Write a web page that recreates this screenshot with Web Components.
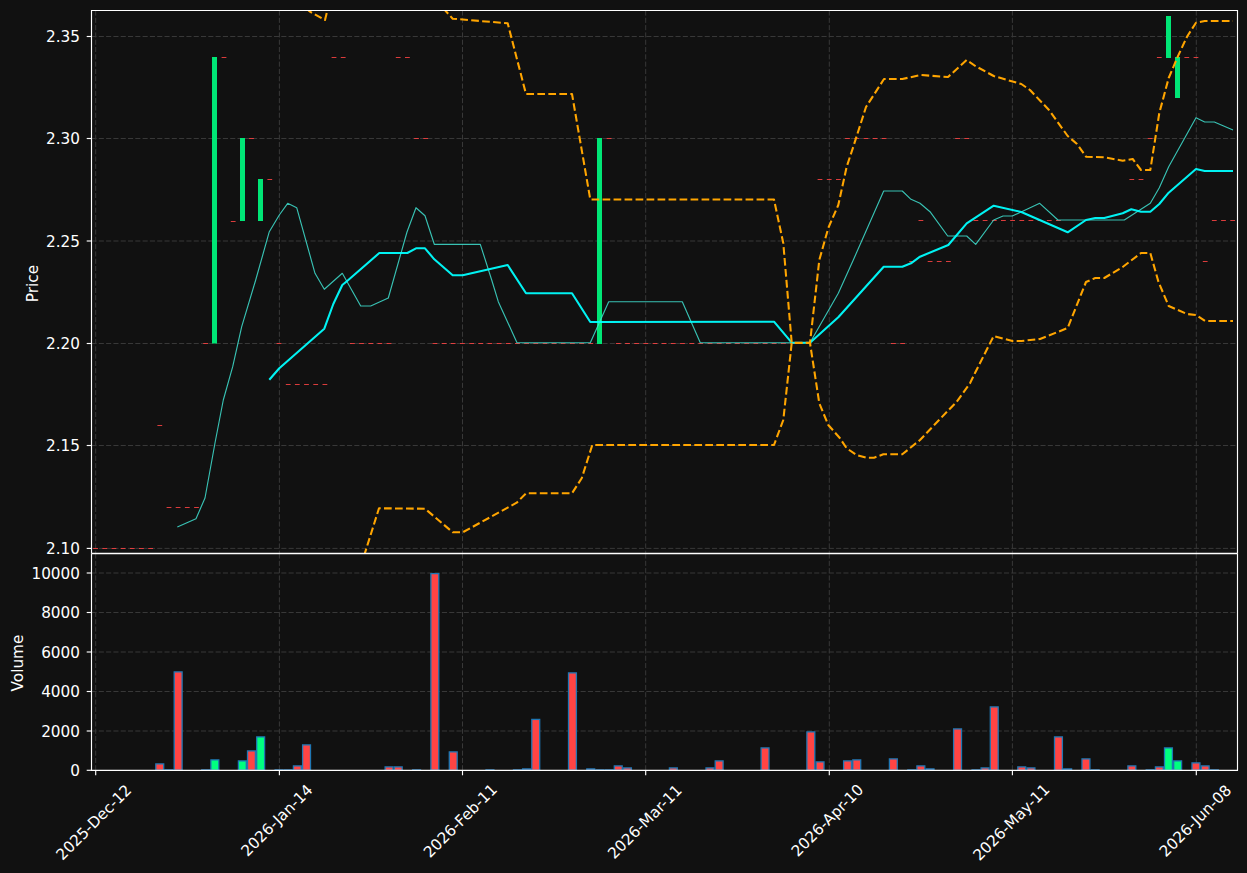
<!DOCTYPE html>
<html lang="en"><head><meta charset="utf-8"><title>Chart</title>
<style>html,body{margin:0;padding:0;background:#111111}</style></head>
<body>
<chart-figure>
  <price-panel></price-panel>
  <volume-panel></volume-panel>
</chart-figure>
<script>
const X = i => 95.6 + 9.17 * i;
const GX = [95.7, 279.4, 462.5, 645.7, 829.3, 1012.4, 1196.3];
const FONT = `font-family="DejaVu Sans" font-size="15.28" fill="#ffffff"`;
const pts = a => a.map(p => p.join(',')).join(' ');
const vgrid = (y1, y2) => GX.map(x => `<line x1="${x}" x2="${x}" y1="${y1}" y2="${y2}" class="g"/>`).join('');
const baseCss = `:host{display:block;width:1247px}svg{display:block;overflow:visible}
  .g{stroke:#383838;stroke-width:1;stroke-dasharray:5.1 2.2;fill:none}
  .s{stroke:#fff;stroke-width:1.15;fill:none}`;

class ChartFigure extends HTMLElement {
  constructor() {
    super();
    this.attachShadow({ mode: 'open' }).innerHTML = `<style>
      :host{display:flex;flex-direction:column;width:1247px;height:873px;padding-top:10px;box-sizing:border-box;background:#111;overflow:hidden}
    </style><slot></slot>`;
  }
}

const TEAL = [[177.3,527],[196,518.7],[205,498],[215,443],[223.3,400],[232.7,366.7],[241.7,326.7],[255.7,280],[269.3,231.7],[279.3,215],[287.7,203.3],[296.7,207.7],[315,273.3],[324.3,289.3],[342.3,273.3],[360.7,306],[370.7,306],[388.3,298],[407,232],[416,207.7],[425,215.7],[434.3,244.3],[480.3,244.3],[491.7,280],[498.3,301.7],[517,342.7],[590.3,342.7],[608.7,301.7],[682.3,301.7],[700.3,342.7],[810,342.7],[838.3,293.3],[853.3,260],[883.7,191],[902.3,191],[911,199.3],[920,203.3],[930,211.7],[947.7,236],[966.7,236],[975.7,244.3],[993.7,220],[1003,216],[1012.3,216],[1039.7,203.3],[1058,220],[1124.3,220],[1150.3,203.3],[1159.3,187.7],[1168.7,166.7],[1196,117.7],[1204.7,122],[1214.3,122],[1233,130]];
const CYAN = [[269.3,379.7],[279.3,368.3],[324.3,328.7],[333.3,304],[342.3,285],[348.3,280],[379.3,253],[407.3,253],[416,248.3],[425,248.3],[434.3,259.3],[452.7,275.3],[462.7,275.3],[507.7,265],[526,293.3],[572,293.3],[590.3,322],[774,321.7],[791.7,342.7],[810,342.7],[838.3,317.3],[883.7,266.7],[902.3,266.7],[911,263.3],[920,256.7],[948.3,245],[966.7,223.3],[993.7,205.7],[1021.3,212],[1067.7,232.3],[1086,220],[1095.3,218],[1104.3,218],[1122.7,213.3],[1131.3,209.3],[1141,211.7],[1150.3,211.7],[1159.3,204],[1168.7,192.7],[1196,169],[1204.7,171],[1233,171]];
const UP1 = [[306,8],[310,11.7],[325,20],[328,8]];
const UP2 = [[443,8],[452.7,18.7],[507.7,23.3],[526,94],[572,94],[590.3,199.5],[774,199.5],[783.3,243.3],[791.7,342.7],[810,342.7],[819.3,260],[828.3,228],[838.3,205],[846.7,166.7],[853.3,146.7],[866,107],[884,79],[902.3,79],[921,75],[948,77],[966.7,60],[975.3,66],[993.7,76],[1021.3,84],[1030,90],[1049,110],[1067.7,136],[1077,144],[1086,156.7],[1104.3,157.3],[1122.7,160.7],[1132.7,159],[1141,170],[1150.3,170],[1159.3,113],[1168.7,78],[1177.7,56.7],[1187,36.7],[1196,22.7],[1204.7,21],[1233,21]];
const LOW = [[364,556],[379,508.3],[425,508.7],[452.7,532.3],[462.7,532.3],[516.7,502.7],[526,493.3],[572,493.3],[581.7,478.3],[592.3,445],[774,445],[783.3,420],[791.7,343],[810,343],[819.3,403.3],[828.3,425],[840,438.3],[846.7,448.3],[856.7,455],[866.7,457.7],[874,457.7],[883.3,454.3],[902.3,454.3],[920,440],[940,419],[956.7,401.7],[970,383.3],[975,373],[993.7,336],[1012.4,341],[1021.3,341],[1040,339],[1067.7,328],[1086,282],[1095.3,278],[1104.3,278],[1122.7,267],[1141,253],[1150.3,253],[1158.5,282],[1168.7,306],[1187,314],[1196,315],[1205,321],[1233,321]];
const range = (a, b) => Array.from({ length: b - a + 1 }, (_, k) => a + k);
const DOJI = [
  [548.5, range(0, 6)], [425.5, [7]], [507.5, range(8, 11)],
  [343.5, [12, 20, ...range(28, 32), ...range(37, 54), ...range(57, 76), 87, 88]],
  [384.5, range(21, 25)], [221.5, [15]],
  [261.5, [89, 91, 92, 93, 121]], [220.5, [90, ...range(96, 105), 122, 123, 124]],
  [57.5, [14, 26, 27, 33, 34, 116, 117, 118, 119, 120]],
  [138.5, [17, 35, 36, 56, ...range(82, 86), 94, 95, 115]],
  [179.5, [19, 79, 80, 81, 113, 114]],
];
const CANDLES = [[13, 57, 343.5], [16, 138, 221], [18, 179, 221], [55, 138, 344], [117, 16, 58], [118, 57, 98]];

class PricePanel extends HTMLElement {
  constructor() {
    super();
    const ylab = [[36.5, '2.35'], [138.5, '2.30'], [241, '2.25'], [343.5, '2.20'], [445.5, '2.15'], [548.4, '2.10']];
    const hgrid = ylab.map(([y]) => `<line x1="91.5" x2="1237.5" y1="${y}" y2="${y}" class="g"/>`).join('');
    const ticks = ylab.map(([y]) => `<line x1="86.7" x2="91.5" y1="${y}" y2="${y}" class="s"/>`).join('');
    const labels = ylab.map(([y, t]) => `<text x="80" y="${y + 5.8}" text-anchor="end" ${FONT}>${t}</text>`).join('');
    const doji = DOJI.map(([y, l]) => l.map(i => `<line x1="${(X(i) - 2.4).toFixed(1)}" x2="${(X(i) + 2.4).toFixed(1)}" y1="${y}" y2="${y}" class="d"/>`).join('')).join('');
    const cand = CANDLES.map(([i, a, b]) => `<rect x="${Math.round(X(i) - 2.5)}" y="${a}" width="5" height="${b - a}" fill="#00e676"/>`).join('');
    this.attachShadow({ mode: 'open' }).innerHTML = `<style>${baseCss}
      :host{height:543px;flex:none}
      .d{stroke:#ff4444;stroke-width:1;opacity:.85}
      .t{fill:none;stroke:#40e0d0;stroke-width:1.15;opacity:.85;stroke-linejoin:round}
      .c{fill:none;stroke:#00ffff;stroke-width:2.08;opacity:.95;stroke-linejoin:round}
      .o{fill:none;stroke:#ffa500;stroke-width:2.08;stroke-dasharray:7.7 3.3;stroke-linejoin:round}
    </style>
    <svg width="1247" height="543" viewBox="0 10 1247 543" role="img" aria-label="Price chart">
      <defs><clipPath id="a"><rect x="91.5" y="10.5" width="1146" height="543"/></clipPath></defs>
      ${hgrid}${vgrid(10.5, 553.5)}
      <g clip-path="url(#a)">
        ${doji}${cand}
        <polyline class="t" points="${pts(TEAL)}"/>
        <polyline class="c" points="${pts(CYAN)}"/>
        <polyline class="o" points="${pts(UP1)}"/>
        <polyline class="o" points="${pts(UP2)}"/>
        <polyline class="o" points="${pts(LOW)}"/>
      </g>
      <path d="M91.5 553.5V10.5H1237.5V553.5" class="s"/>
      ${ticks}${labels}
      <text transform="translate(38 283.5) rotate(-90)" text-anchor="middle" ${FONT}>Price</text>
    </svg>`;
  }
}

const VOL = [[7,763.3,'r'],[8,769.3,'r'],[9,671.3,'r'],[12,769.3,'r'],[13,759.3,'g'],[16,760.3,'g'],[17,750.3,'r'],[18,736.3,'g'],[20,769.3,'r'],[21,769.3,'r'],[22,765.3,'r'],[23,744.3,'r'],[32,766.3,'r'],[33,766.3,'r'],[35,769.3,'r'],[37,573,'r'],[39,751.3,'r'],[43,769.3,'r'],[46,769.3,'r'],[47,768.3,'r'],[48,718.7,'r'],[52,672.3,'r'],[54,768.3,'r'],[55,769.3,'r'],[56,769.3,'r'],[57,765.3,'r'],[58,767.3,'r'],[63,767.3,'r'],[67,767.3,'r'],[68,760.3,'r'],[73,747.3,'r'],[78,731.3,'r'],[79,761.3,'r'],[82,760.3,'r'],[83,759.3,'r'],[87,758.3,'r'],[89,769.3,'r'],[90,765.3,'r'],[91,768.3,'r'],[94,728.3,'r'],[96,769.3,'r'],[97,767.3,'r'],[98,706.3,'r'],[101,766.3,'r'],[102,767.3,'r'],[105,736.3,'r'],[106,768.3,'r'],[108,758.3,'r'],[109,769.3,'r'],[113,765.3,'r'],[115,769.3,'r'],[116,766.3,'r'],[117,747.3,'g'],[118,760.3,'g'],[120,762.3,'r'],[121,765.3,'r'],[122,769.3,'r']];
const XLAB = [[94,'2025-Dec-12',822.5],[277,'2026-Jan-14',820.5],[460.5,'2026-Feb-11',821],[645,'2026-Mar-11',822],[827.5,'2026-Apr-10',820.5],[1011.5,'2026-May-11',822.5],[1195.5,'2026-Jun-08',821]];

class VolumePanel extends HTMLElement {
  constructor() {
    super();
    const ylab = [[573, '10000'], [612.5, '8000'], [652, '6000'], [691.5, '4000'], [731, '2000'], [770.3, '0']];
    const hgrid = ylab.slice(0, 5).map(([y]) => `<line x1="91.5" x2="1237.5" y1="${y}" y2="${y}" class="g"/>`).join('');
    const ticks = ylab.map(([y]) => `<line x1="86.7" x2="91.5" y1="${y}" y2="${y}" class="s"/>`).join('');
    const labels = ylab.map(([y, t]) => `<text x="80" y="${y + 5.8}" text-anchor="end" ${FONT}>${t}</text>`).join('');
    const bars = VOL.map(([i, top, c]) => `<rect x="${(X(i) - 3.95).toFixed(1)}" y="${(top + .65).toFixed(1)}" width="7.9" height="${(770.3 - top - .65).toFixed(1)}" fill="${c === 'r' ? '#ff4444' : '#00ff7f'}" stroke="#1f77b4" stroke-width="1.3"/>`).join('');
    const xt = GX.map(x => `<line x1="${x}" x2="${x}" y1="770.3" y2="775.3" class="s"/>`).join('');
    const xl = XLAB.map(([x, t, y]) => `<text transform="translate(${x} ${y}) rotate(-45)" text-anchor="middle" dominant-baseline="central" ${FONT}>${t}</text>`).join('');
    this.attachShadow({ mode: 'open' }).innerHTML = `<style>${baseCss}:host{height:320px;flex:none}.m{stroke-width:1.5}</style>
    <svg width="1247" height="320" viewBox="0 553 1247 320" role="img" aria-label="Volume chart">
      ${hgrid}${vgrid(553.5, 770.3)}
      ${bars}
      <path d="M91.5 553.5V770.3H1237.5V553.5" class="s"/>
      <line x1="91.5" x2="1237.5" y1="553.5" y2="553.5" class="s m"/>
      ${ticks}${labels}${xt}${xl}
      <text transform="translate(23 663) rotate(-90)" text-anchor="middle" ${FONT}>Volume</text>
    </svg>`;
  }
}
customElements.define('chart-figure', ChartFigure);
customElements.define('price-panel', PricePanel);
customElements.define('volume-panel', VolumePanel);
</script>
</body></html>
